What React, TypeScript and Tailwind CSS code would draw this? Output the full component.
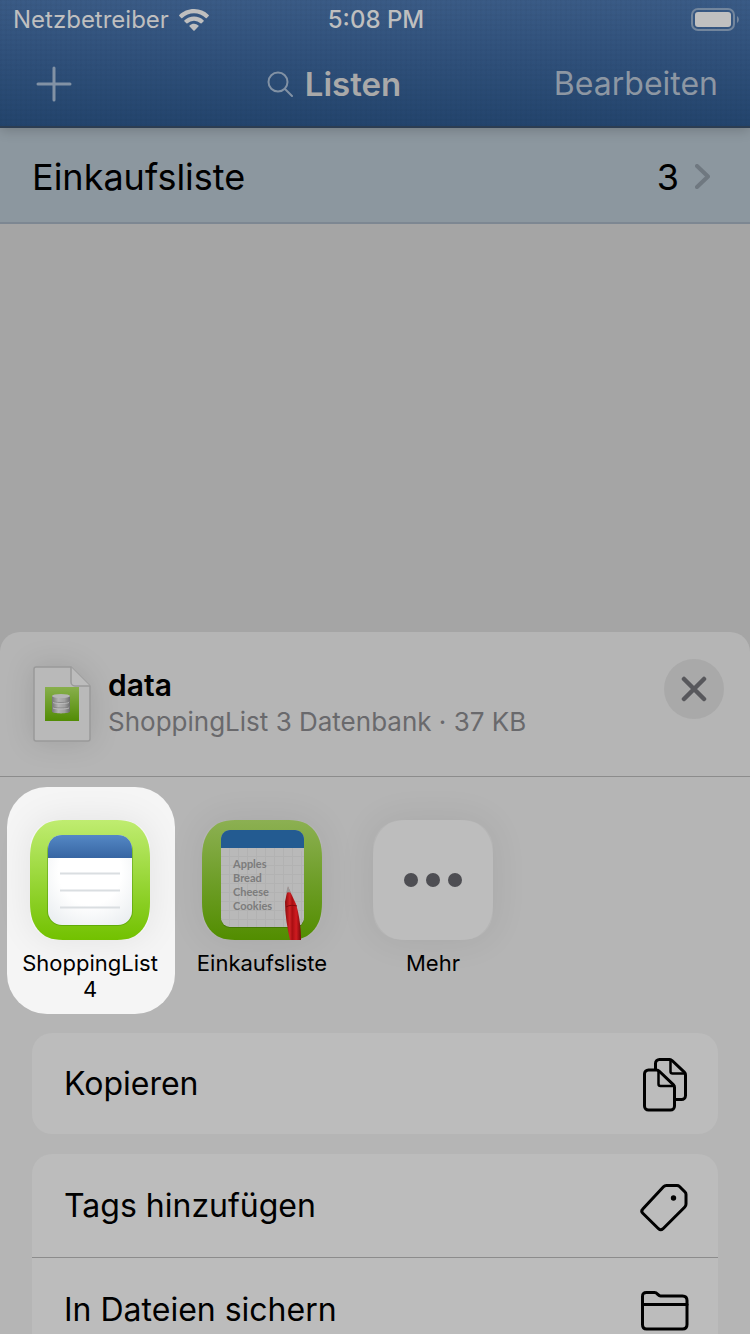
import type { ReactNode } from 'react';

function WifiIcon() {
    return (
        <svg width="30" height="22" viewBox="0 0 30 22" fill="#bfbfbf" aria-hidden="true">
            <path d="M15 0C9.300 0 4 2.200.300 5.900a.8.8 0 0 0 0 1.100l1.900 2a.8.8 0 0 0 1.100 0A17 17 0 0 1 15 4.300 17 17 0 0 1 26.700 9a.8.8 0 0 0 1.100 0l1.900-2a.8.8 0 0 0 0-1.100A21 21 0 0 0 15 0Z" />
            <path d="M15 7.500c-3.700 0-7 1.400-9.500 3.700a.8.8 0 0 0 0 1.200l1.900 1.900a.8.8 0 0 0 1.100 0 9.500 9.500 0 0 1 13 0 .8.8 0 0 0 1.100 0l1.900-1.900a.8.8 0 0 0 0-1.200A14 14 0 0 0 15 7.500Z" />
            <path d="M15 14.800c-1.700 0-3.200.6-4.400 1.600a.8.8 0 0 0 0 1.200l3.800 3.900a.8.8 0 0 0 1.200 0l3.800-3.900a.8.8 0 0 0 0-1.200 6.700 6.700 0 0 0-4.400-1.600Z" />
        </svg>
    );
}

function BatteryIcon() {
    return (
        <svg width="48" height="24" viewBox="0 0 48 24" fill="none" role="img" aria-label="Batterie">
            <rect x="1" y="1" width="42" height="21" rx="6" stroke="#73869d" strokeWidth="2" />
            <rect x="4" y="4" width="36" height="15" rx="3" fill="#c0c0c0" />
            <path d="M46 8c2.500 1.500 2.500 5.500 0 7V8Z" fill="#73869d" />
        </svg>
    );
}

function DocumentIcon() {
    return (
        <svg width="58" height="76" viewBox="0 0 58 76" fill="none" className="shrink-0 drop-shadow-[0_0_14px_rgba(0,0,0,0.12)]" aria-hidden="true">
            <defs>
                <linearGradient id="doc-green" x1="0" y1="0" x2="0" y2="1">
                    <stop offset="0" stopColor="#88af4c" />
                    <stop offset="1" stopColor="#528c05" />
                </linearGradient>
                <linearGradient id="doc-silver">
                    <stop offset="0" stopColor="#777" />
                    <stop offset=".35" stopColor="#b4b4b4" />
                    <stop offset=".7" stopColor="#a0a0a0" />
                    <stop offset="1" stopColor="#6c6c6c" />
                </linearGradient>
            </defs>
            <path d="M3 1h35l19 19v53a2 2 0 0 1-2 2H3a2 2 0 0 1-2-2V3a2 2 0 0 1 2-2Z" fill="#b9b9b9" stroke="#999" strokeWidth="1.500" />
            <path d="M38 1v15a4 4 0 0 0 4 4h15" fill="#bcbcbc" stroke="#999" strokeWidth="1.500" />
            <path d="M12 21h34v34H12z" fill="url(#doc-green)" />
            <path d="M19 30v15.500c0 2.500 18 2.500 18 0V30Z" fill="url(#doc-silver)" />
            <ellipse cx="28" cy="30" rx="9" ry="2" fill="#b5b5b5" />
            <path d="M19 35c0 2 18 2 18 0M19 40.500c0 2 18 2 18 0" stroke="#808080" strokeWidth=".8" />
            <path d="M20 36.500c2 1.300 14 1.300 16 0M20 42c2 1.300 14 1.300 16 0" stroke="#c0c0c0" strokeWidth=".8" />
        </svg>
    );
}

function ShoppingListIcon() {
    return (
        <svg width="120" height="120" viewBox="0 0 120 120" className="block" aria-hidden="true">
            <defs>
                <linearGradient id="sl-green" x1="0" y1="0" x2="0" y2="1">
                    <stop offset="0" stopColor="#bfec70" />
                    <stop offset="1" stopColor="#72c100" />
                </linearGradient>
                <linearGradient id="sl-blue" x1="0" y1="0" x2="0" y2="1">
                    <stop offset="0" stopColor="#5488c5" />
                    <stop offset="1" stopColor="#3765a2" />
                </linearGradient>
                <radialGradient id="sl-paper" cx=".5" cy=".4" r=".75">
                    <stop offset=".5" stopColor="#fff" />
                    <stop offset="1" stopColor="#e8ecef" />
                </radialGradient>
            </defs>
            <path d="M38 0h44c14 0 21 1 28 8s10 16 10 30v44c0 14-3 23-10 30s-14 8-28 8H38c-14 0-21-1-28-8S0 96 0 82V38C0 24 3 15 10 8S24 0 38 0Z" fill="url(#sl-green)" />
            <rect x="17" y="16" width="86" height="90" rx="15" fill="#3c8500" opacity=".4" />
            <rect x="18" y="15" width="84" height="90" rx="14" fill="url(#sl-paper)" />
            <path d="M18 38v-9c0-8 6-14 14-14h56c8 0 14 6 14 14v9Z" fill="url(#sl-blue)" />
            <path d="M30 53.500h60M30 70.500h60M30 87.500h60" stroke="#dadee1" strokeWidth="2" />
        </svg>
    );
}

function EinkaufslisteIcon() {
    return (
        <svg width="120" height="120" viewBox="0 0 120 120" className="block" aria-hidden="true">
            <defs>
                <linearGradient id="el-green" x1="0" y1="0" x2="0" y2="1">
                    <stop offset="0" stopColor="#8cb052" />
                    <stop offset="1" stopColor="#528d00" />
                </linearGradient>
                <linearGradient id="el-red">
                    <stop offset="0" stopColor="#8b0b0d" />
                    <stop offset=".3" stopColor="#d02326" />
                    <stop offset=".45" stopColor="#a80e12" />
                    <stop offset=".7" stopColor="#d01b20" />
                    <stop offset="1" stopColor="#79090b" />
                </linearGradient>
                <pattern id="el-grid" width="9" height="9" patternUnits="userSpaceOnUse">
                    <path d="M0 .5h9M.5 0v9" stroke="#b2b2b2" />
                </pattern>
            </defs>
            <path d="M38 0h44c14 0 21 1 28 8s10 16 10 30v44c0 14-3 23-10 30s-14 8-28 8H38c-14 0-21-1-28-8S0 96 0 82V38C0 24 3 15 10 8S24 0 38 0Z" fill="url(#el-green)" />
            <rect x="19" y="11" width="83" height="97" rx="9" fill="#315d00" opacity=".45" />
            <rect x="19" y="10" width="83" height="97" rx="9" fill="#b9b9b9" />
            <rect x="19" y="28" width="83" height="79" rx="9" fill="url(#el-grid)" />
            <path d="M19 28v-9c0-5 4-9 9-9h65c5 0 9 4 9 9v9Z" fill="#235b91" />
            <g fill="#7c7c7c" fontSize="11" fontWeight="700" fontFamily="'Liberation Sans Narrow', Lato, sans-serif">
                <text x="31" y="48">Apples</text>
                <text x="31" y="62">Bread</text>
                <text x="31" y="76">Cheese</text>
                <text x="31" y="90">Cookies</text>
            </g>
            <path d="m86 67-3 15c0 12 2 25 5 38h11c0-13-2-26-5-36Z" fill="url(#el-red)" />
            <path d="m86 66-2 7c2-1 4-1 5 0Z" fill="#999" />
            <path d="M84 87c3-2 7-2 11-1" stroke="#83090c" fill="none" />
        </svg>
    );
}

function MoreIcon() {
    return (
        <svg width="120" height="120" viewBox="0 0 120 120" className="block" aria-hidden="true">
            <path d="M38 0h44c14 0 21 1 28 8s10 16 10 30v44c0 14-3 23-10 30s-14 8-28 8H38c-14 0-21-1-28-8S0 96 0 82V38C0 24 3 15 10 8S24 0 38 0Z" fill="#bdbdbd" />
            <g fill="#4e4e53">
                <circle cx="38" cy="60" r="7" />
                <circle cx="60" cy="60" r="7" />
                <circle cx="82" cy="60" r="7" />
            </g>
        </svg>
    );
}

function ActionIcon({ children }: { children: ReactNode }) {
    return (
        <svg width="50" height="56" viewBox="0 0 50 56" fill="none" stroke="#000" strokeWidth="3" strokeLinecap="round" strokeLinejoin="round" className="shrink-0" aria-hidden="true">
            {children}
        </svg>
    );
}

const apps = [
    { name: 'ShoppingList 4', icon: <ShoppingListIcon />, active: true },
    { name: 'Einkaufsliste', icon: <EinkaufslisteIcon />, active: false },
    { name: 'Mehr', icon: <MoreIcon />, active: false },
];

export default function App() {
    return (
        <div className="flex h-screen flex-col overflow-hidden bg-[#a5a5a5] font-['Inter','Liberation_Sans',sans-serif] text-black">
            {/* Status bar + navigation */}
            <header className="relative h-32 shrink-0 border-b-2 border-[#2c3d52] bg-[repeating-linear-gradient(90deg,rgba(0,0,0,0.02)_0_2px,transparent_2px_5px),repeating-linear-gradient(0deg,rgba(0,0,0,0.02)_0_2px,transparent_2px_5px),linear-gradient(#3a5b86,#23446d)] shadow-[0_2px_12px_rgba(0,0,0,0.2)]">
                <div className="grid h-10 grid-cols-[1fr_auto_1fr] items-center pr-[11px] pl-[13px] text-2xl text-[#bfbfbf]">
                    <div className="flex items-center gap-[10px]">
                        <span>Netzbetreiber</span>
                        <WifiIcon />
                    </div>
                    <span className="font-medium">5:08 PM</span>
                    <div className="flex justify-end">
                        <BatteryIcon />
                    </div>
                </div>
                <div className="grid h-[88px] grid-cols-[1fr_auto_1fr] items-center pr-8 pl-9 text-[#8d97a3]">
                    <button type="button" aria-label="Neue Liste" className="w-9">
                        <svg width="36" height="36" viewBox="0 0 36 36" stroke="#8292a5" strokeWidth="3" strokeLinecap="round">
                            <path d="M18 2v32M2 18h32" />
                        </svg>
                    </button>
                    <button type="button" className="mr-[86px] flex items-center gap-3 text-[33px] leading-10 font-semibold text-[#a9a9a9]">
                        <svg width="26" height="26" viewBox="0 0 26 26" fill="none" stroke="#8292a5" strokeWidth="2" strokeLinecap="round" aria-hidden="true">
                            <circle cx="11" cy="11" r="9.500" />
                            <path d="m18 18 7 7" />
                        </svg>
                        Listen
                    </button>
                    <button type="button" className="justify-self-end text-[32px] leading-10">Bearbeiten</button>
                </div>
            </header>

            {/* Lists */}
            <main className="min-h-0 flex-1">
                <a href="#einkaufsliste" className="flex h-24 items-center border-b-2 border-[#7d8792] bg-[#8c979f] pt-[3px] pr-10 pl-8 text-[36px] leading-12">
                    <span className="flex-1">Einkaufsliste</span>
                    <span>3</span>
                    <svg width="15" height="25" viewBox="0 0 15 25" fill="none" stroke="#6f7880" strokeWidth="4" strokeLinecap="round" strokeLinejoin="round" className="ml-4" aria-hidden="true">
                        <path d="m2 2 11 10.500L2 23" />
                    </svg>
                </a>
            </main>

            {/* Share sheet */}
            <section className="basis-[702px] shrink-0 overflow-hidden rounded-t-[20px] bg-[#b5b5b5]">
                <div className="flex h-[145px] items-start border-b border-[#8c8c8c] pt-[27px] pr-[26px] pl-[33px]">
                    <div className="flex flex-1 items-center gap-[17px] pt-[7px]">
                        <DocumentIcon />
                        <div>
                            <h1 className="text-[30px] leading-9 font-semibold">data</h1>
                            <p className="text-[26px] leading-[38px] text-[#69696c]">ShoppingList 3 Datenbank · 37 KB</p>
                        </div>
                    </div>
                    <button type="button" aria-label="Schließen" className="flex size-[60px] items-center justify-center rounded-full bg-[#a9a9a9]">
                        <svg width="26" height="26" viewBox="0 0 26 26" stroke="#58585c" strokeWidth="4.500" strokeLinecap="round">
                            <path d="m3 3 20 20M23 3 3 23" />
                        </svg>
                    </button>
                </div>

                <div className="flex gap-[3px] px-[7px] pt-[10px]">
                    {apps.map((app) => (
                        <button
                            key={app.name}
                            type="button"
                            className={`flex h-[227px] w-[168px] flex-col items-center rounded-[40px] pt-[33px] ${app.active ? 'bg-[#f5f5f5] pr-[10px] pl-2' : 'px-2'}`}
                        >
                            <span className="rounded-[28px] shadow-[0_0_36px_rgba(0,0,0,0.08)]">{app.icon}</span>
                            <span className="pt-[10px] text-[22px] leading-[26px]">{app.name}</span>
                        </button>
                    ))}
                </div>

                <div className="flex flex-col gap-5 px-8 pt-[19px] text-[32px] leading-10">
                    <button type="button" className="flex h-[101px] items-center justify-between rounded-[20px] bg-[#bcbcbc] pr-7 pl-8">
                        Kopieren
                        <ActionIcon>
                            <path d="M15.500 13V7.500a4 4 0 0 1 4-4h10c1 0 2 .4 2.800 1.200l12 11.500c.8.8 1.200 1.600 1.200 2.800v20.500a4 4 0 0 1-4 4h-6" />
                            <path d="M30.500 4v11.500a2 2 0 0 0 2 2h12.500" strokeWidth="2.500" />
                            <path d="M8.500 14h8c1 0 2 .4 2.800 1.200l14 13.500c.8.8 1.200 1.700 1.200 2.800V50a4 4 0 0 1-4 4h-22a4 4 0 0 1-4-4V18a4 4 0 0 1 4-4Z" />
                            <path d="M18.500 15v13a2 2 0 0 0 2 2H34" strokeWidth="2.500" />
                        </ActionIcon>
                    </button>
                    <div className="overflow-hidden rounded-t-[20px] bg-[#bcbcbc]">
                        <button type="button" className="flex h-[104px] w-full items-center justify-between border-b border-[#8c8c8c] pr-7 pl-8">
                            Tags hinzufügen
                            <ActionIcon>
                                <path d="M26.500 7.500H37c1 0 1.800.3 2.500 1l5.500 5.500c.7.7 1 1.500 1 2.500v9.500c0 1.200-.4 2.200-1.200 3L23 50.700c-1.500 1.400-3 1.400-4.500 0L2.800 35.300c-1.200-1.200-1.200-3 0-4.200L23.500 8.800c.8-.9 1.800-1.300 3-1.300Z" />
                                <circle cx="33.500" cy="20" r="2.700" fill="#000" stroke="none" />
                            </ActionIcon>
                        </button>
                        <button type="button" className="flex h-[104px] w-full items-center justify-between pr-7 pl-8">
                            In Dateien sichern
                            <ActionIcon>
                                <path d="M6.500 10.500h8c3 0 3.500 3.500 6 3.500h22c3 0 4.500 1.500 4.500 4.500v24c0 3-1.500 4.500-4.500 4.500h-36c-3 0-4-1.500-4-4.500v-28c0-3 1-4 4-4Z" />
                                <path d="M3 22.500h44" />
                            </ActionIcon>
                        </button>
                    </div>
                </div>
            </section>
        </div>
    );
}
